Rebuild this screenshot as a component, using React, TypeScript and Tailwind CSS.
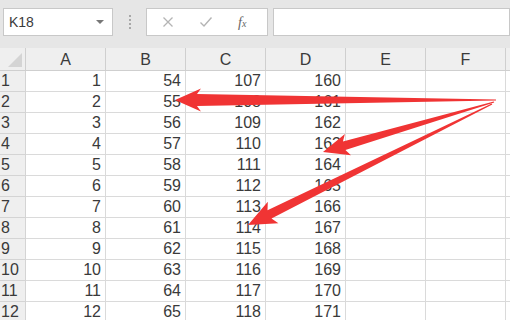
import React from 'react';

const cols = ['A', 'B', 'C', 'D', 'E', 'F'];
const rows = Array.from({ length: 12 }, (_, i) => i + 1);

type Pt = [number, number];

// tapered arrow: thin at the origin, wide shaft into a triangular head
function arrowPoints(o: Pt, t: Pt, headLen = 22, headW = 22, shaftW = 10) {
  const dx = t[0] - o[0];
  const dy = t[1] - o[1];
  const len = Math.hypot(dx, dy);
  const ux = dx / len;
  const uy = dy / len;
  const nx = -uy;
  const ny = ux;
  const bx = t[0] - ux * headLen;
  const by = t[1] - uy * headLen;
  const barb = 4;
  const pts: Pt[] = [
    [o[0] + nx * 0.6, o[1] + ny * 0.6],
    [bx + nx * (shaftW / 2), by + ny * (shaftW / 2)],
    [bx - ux * barb + nx * (headW / 2), by - uy * barb + ny * (headW / 2)],
    t,
    [bx - ux * barb - nx * (headW / 2), by - uy * barb - ny * (headW / 2)],
    [bx - nx * (shaftW / 2), by - ny * (shaftW / 2)],
    [o[0] - nx * 0.6, o[1] - ny * 0.6],
  ];
  return pts.map((p) => `${p[0].toFixed(1)},${p[1].toFixed(1)}`).join(' ');
}

function Arrows() {
  return (
    <svg className="absolute inset-0 pointer-events-none" width={510} height={320} viewBox="0 0 510 320">
      <polygon points={arrowPoints([496, 100], [175, 100], 22, 23, 12)} fill="#f03434" />
      <polygon points={arrowPoints([494, 102], [323, 152], 22, 22, 9)} fill="#f03434" />
      <polygon points={arrowPoints([492, 104], [248, 225], 24, 24, 9)} fill="#f03434" />
    </svg>
  );
}

export default function App() {
  return (
    <div
      className="relative w-[510px] h-[320px] overflow-hidden bg-[#e6e6e6] text-[#3a3a3a]"
      style={{ fontFamily: '"Liberation Sans", Arial, sans-serif' }}
    >
      {/* formula bar */}
      <div className="flex items-center h-[48px] pl-[3px] pb-[12px] pt-[8px]">
        <div className="flex items-center justify-between w-[110px] h-[28px] bg-white border border-[#c8c8c8] pl-[5px] pr-[8px]">
          <span className="text-[14px]">K18</span>
          <span className="w-0 h-0 border-l-[4px] border-r-[4px] border-t-[4px] border-l-transparent border-r-transparent border-t-[#777]" />
        </div>
        <div className="flex flex-col gap-[2px] ml-[16px] mr-[15px]">
          <span className="w-[2px] h-[2px] bg-[#a8a8a8]" />
          <span className="w-[2px] h-[2px] bg-[#a8a8a8]" />
          <span className="w-[2px] h-[2px] bg-[#a8a8a8]" />
          <span className="w-[2px] h-[2px] bg-[#a8a8a8]" />
        </div>
        <div className="flex items-center w-[122px] h-[28px] bg-white border border-[#c8c8c8]">
          <svg width="12" height="12" viewBox="0 0 12 12" className="ml-[15px]">
            <path d="M1.5 1.5 L10.5 10.5 M10.5 1.5 L1.5 10.5" stroke="#b4b4b4" strokeWidth="1.3" />
          </svg>
          <svg width="14" height="12" viewBox="0 0 14 12" className="ml-[25px]">
            <path d="M1.5 6.5 L5 10 L12.5 1.5" stroke="#b4b4b4" strokeWidth="1.4" fill="none" />
          </svg>
          <span
            className="ml-[25px] text-[14px] italic text-[#666]"
            style={{ fontFamily: '"Liberation Serif", serif' }}
          >
            f<span className="text-[10px]">x</span>
          </span>
        </div>
        <div className="flex-1 h-[28px] ml-[5px] bg-white border border-[#c8c8c8]" />
      </div>

      {/* sheet grid */}
      <div className="grid grid-cols-[26px_repeat(6,80px)_1fr] text-[16px] leading-none">
        <div className="h-[23px] bg-[#efefef] border-r border-b border-[#cfcfcf]">
          <svg width="25" height="22" viewBox="0 0 25 22">
            <polygon points="22,5 22,19 8,19" fill="#d4d4d4" />
          </svg>
        </div>
        {cols.map((c) => (
          <div key={c} className="h-[23px] bg-[#efefef] border-r border-b border-[#cfcfcf] flex items-center justify-center pt-[1px]">
            {c}
          </div>
        ))}
        <div className="h-[23px] bg-[#efefef] border-b border-[#cfcfcf]" />

        {rows.map((r) => (
          <React.Fragment key={r}>
            <div className="h-[21px] bg-[#efefef] border-r border-b border-[#d4d4d4] flex items-center pl-[1px]">
              {r}
            </div>
            {[r, r + 53, r + 106, r + 159].map((v, i) => (
              <div key={i} className="h-[21px] bg-white border-r border-b border-[#dadada] flex items-center justify-end pr-[4px]">
                {v}
              </div>
            ))}
            <div className="h-[21px] bg-white border-r border-b border-[#dadada]" />
            <div className="h-[21px] bg-white border-r border-b border-[#dadada]" />
            <div className="h-[21px] bg-white border-b border-[#dadada]" />
          </React.Fragment>
        ))}
      </div>

      <Arrows />
    </div>
  );
}
